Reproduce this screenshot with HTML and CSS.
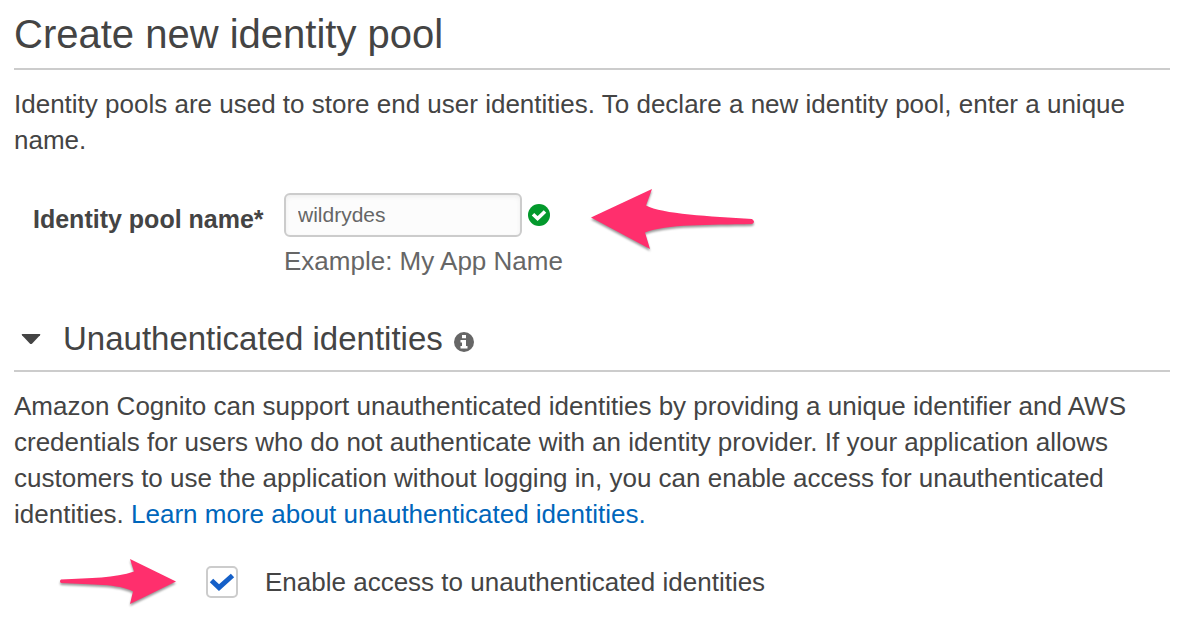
FILE: index.html
```html
<!DOCTYPE html>
<html lang="en">
<head>
<meta charset="utf-8">
<title>Create new identity pool</title>
<link rel="stylesheet" href="styles.css">
</head>
<body>
<main class="page">
  <h1 class="title">Create new identity pool</h1>
  <p class="text">Identity pools are used to store end user identities. To declare a new identity pool, enter a unique name.</p>

  <div class="field">
    <label class="field-label" for="pool-name">Identity pool name*</label>
    <div class="field-body">
      <div class="field-row">
        <input class="field-input" id="pool-name" type="text" value="wildrydes" aria-describedby="pool-hint">
        <svg class="valid-icon" viewBox="0 0 22 22" role="img" aria-label="Valid">
          <circle cx="11" cy="11" r="11" fill="#03992c"/>
          <path d="M5 10.200 9.600 14.500 17 7.500" fill="none" stroke="#fff" stroke-width="3.600"/>
        </svg>
      </div>
      <span class="hint" id="pool-hint">Example: My App Name</span>
    </div>
    <svg class="arrow arrow-left" viewBox="0 0 166 62" aria-hidden="true">
      <path d="M1 29.500 62 1 56 17.500C72 26 120 28.500 162 31Q166 34 162 36C120 37 76 36 55 44.500L60 61Z" fill="#ff2f6d"/>
    </svg>
  </div>

  <h2 class="section">
    <button class="toggle" type="button" aria-expanded="true">
      <svg class="caret" viewBox="0 0 20 12" aria-hidden="true"><path d="M1.500 1h17q1.500 0 .5 1.300L11.200 10.500q-1.200 1-2.400 0L1 2.300Q0 1 1.500 1Z" fill="#444"/></svg>
      <span>Unauthenticated identities</span>
    </button>
    <svg class="info-icon" viewBox="0 0 20 20" role="img" aria-label="Information">
      <circle cx="10" cy="10" r="10" fill="#666"/>
      <path d="M8 3h4v3.200H8ZM6.500 8H12v6h1.500v2.500h-7V14H8v-3.500H6.500Z" fill="#fff"/>
    </svg>
  </h2>
  <p class="text">Amazon Cognito can support unauthenticated identities by providing a unique identifier and AWS credentials for users who do not authenticate with an identity provider. If your application allows customers to use the application without logging in, you can enable access for unauthenticated identities. <a class="link" href="#">Learn more about unauthenticated identities.</a></p>

  <div class="option">
    <svg class="arrow arrow-right" viewBox="0 0 118 48" aria-hidden="true">
      <path d="M117 23.500 71 1 75 13.500C56 20 32 20 2 21.500Q0 23 2 25C32 27 60 25.500 74 33.500L71 46Z" fill="#ff2f6d"/>
    </svg>
    <label class="check">
      <span class="box">
        <input class="box-input" type="checkbox" checked>
        <svg class="tick" viewBox="0 0 32 32" aria-hidden="true"><path d="M5.500 14.500 13 21.500 26.500 9.500" fill="none" stroke="#1560c8" stroke-width="5"/></svg>
      </span>
      <span>Enable access to unauthenticated identities</span>
    </label>
  </div>
</main>
</body>
</html>
```
FILE: styles.css
```css
* {
  box-sizing: border-box;
}

body {
  margin: 0;
  background: #fff;
  color: #444;
  font-family: "Liberation Sans", Arial, sans-serif;
  font-size: 26px;
  line-height: 36px;
}

.page {
  padding: 8px 16px 16px 14px;
}

.title {
  margin: 0;
  padding-bottom: 8px;
  border-bottom: 2px solid #ccc;
  font-size: 40px;
  font-weight: 400;
  line-height: 52px;
}

.text {
  margin: 16px 0 0;
}

.link {
  color: #0066bb;
  text-decoration: none;
}

.field {
  display: flex;
  align-items: flex-start;
  margin-top: 30px;
  padding-left: 19px;
}

.field-label {
  flex: none;
  width: 251px;
  padding-top: 13px;
  font-size: 25px;
  font-weight: 700;
}

.field-body {
  display: flex;
  flex: none;
  flex-direction: column;
  gap: 6px;
  padding-top: 5px;
}

.field-row {
  display: flex;
  align-items: center;
  gap: 6px;
}

.field-input {
  width: 238px;
  height: 44px;
  padding: 0 12px;
  border: 2px solid #ccc;
  border-radius: 6px;
  background: #fcfcfc;
  box-shadow: inset 0 2px 4px #eee;
  color: #666;
  font: inherit;
  font-size: 21px;
}

.valid-icon {
  width: 22px;
  height: 22px;
}

.hint {
  color: #666;
}

.arrow {
  flex: none;
  overflow: visible;
  filter: drop-shadow(0 2px 1px #999);
}

.arrow-left {
  width: 166px;
  height: 62px;
  margin-left: 27px;
}

.section {
  display: flex;
  align-items: center;
  gap: 11px;
  margin: 40px 0 0;
  padding-bottom: 11px;
  border-bottom: 2px solid #ccc;
  font-size: 33px;
  font-weight: 400;
  line-height: 40px;
}

.toggle {
  display: flex;
  align-items: center;
  gap: 22px;
  padding: 0 0 0 7px;
  border: 0;
  background: none;
  color: inherit;
  font: inherit;
}

.caret {
  width: 20px;
  height: 12px;
}

.info-icon {
  width: 20px;
  height: 20px;
  margin-top: 6px;
}

.option {
  display: flex;
  align-items: center;
  gap: 29px;
  margin-top: 26px;
  padding-left: 45px;
}

.arrow-right {
  width: 118px;
  height: 48px;
}

.check {
  display: flex;
  align-items: center;
  gap: 27px;
}

.box {
  display: grid;
  width: 32px;
  height: 32px;
}

.box-input,
.tick {
  grid-area: 1 / 1;
  width: 100%;
  height: 100%;
}

.box-input {
  margin: 0;
  border: 2px solid #ccc;
  border-radius: 5px;
  background: #fff;
  appearance: none;
}

.tick {
  visibility: hidden;
  pointer-events: none;
}

.box-input:checked + .tick {
  visibility: visible;
}
```
